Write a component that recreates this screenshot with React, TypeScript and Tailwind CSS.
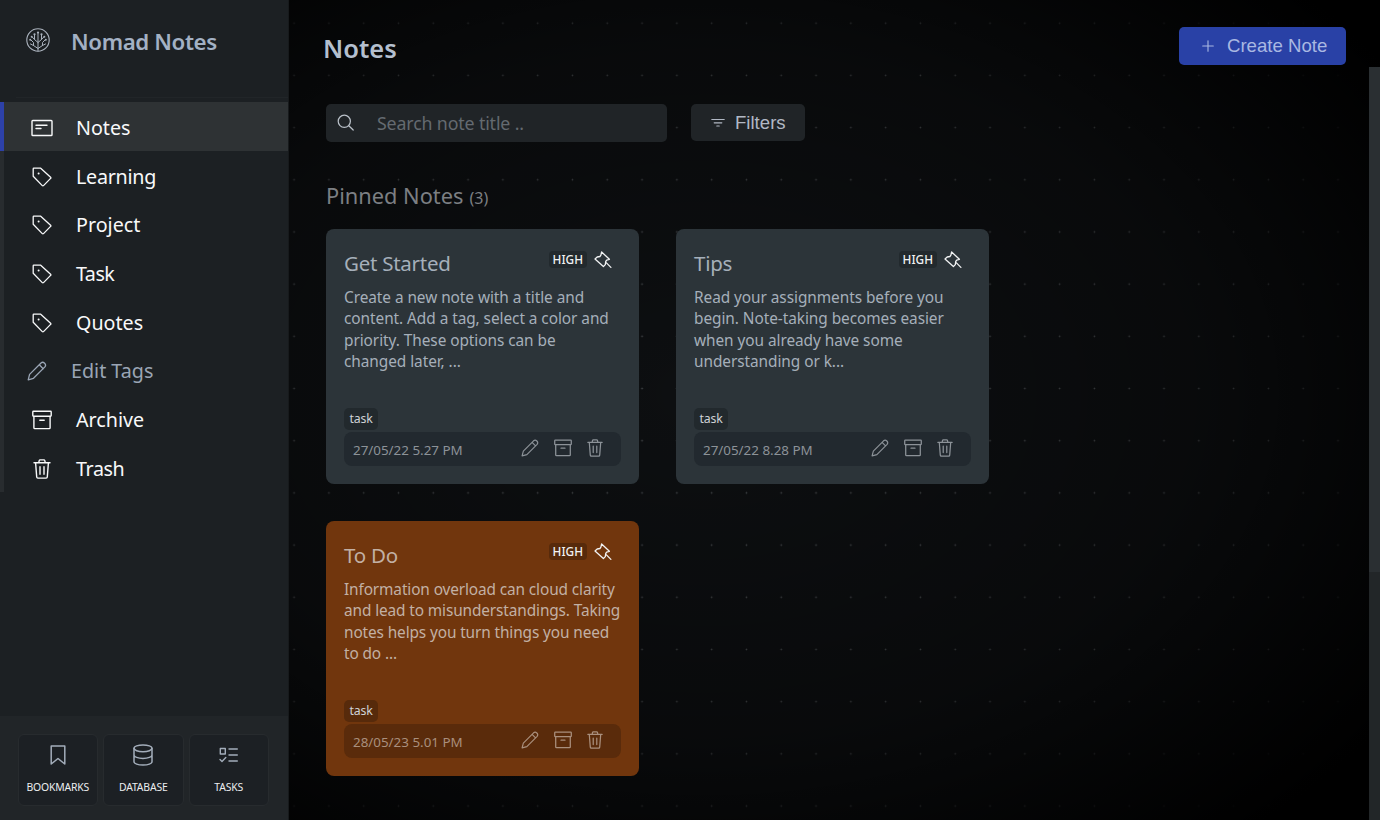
import React from "react";

type IconProps = { className?: string };
type Svg = (p: IconProps) => React.ReactElement;

const base = {
  fill: "none",
  stroke: "currentColor",
  strokeLinecap: "round" as const,
  strokeLinejoin: "round" as const,
};

const LogoIcon: Svg = ({ className }) => (
  <svg viewBox="0 0 24 24" className={className} {...base} strokeWidth={1}>
    <circle cx="12" cy="12" r="11.2" strokeWidth={1.1} />
    <path d="M12 23V5M12 20.500L7.500 17.500V14.500L4.500 11.500M12 20.500L16.500 17.500V14.500L19.500 11.500M7.500 17.500L4.500 16M16.500 17.500L19.500 16M12 14.500L8.500 11.500V7M8.500 11.500L6.200 9M12 14.500L15.500 11.500V7M15.500 11.500L17.800 9" />
    <g fill="currentColor" stroke="none">
      <circle cx="12" cy="4.500" r="1.100" />
      <circle cx="8.500" cy="6.300" r="1.100" />
      <circle cx="15.500" cy="6.300" r="1.100" />
      <circle cx="5.700" cy="8.700" r="1" />
      <circle cx="18.300" cy="8.700" r="1" />
      <circle cx="4.200" cy="11.800" r="1" />
      <circle cx="19.800" cy="11.800" r="1" />
    </g>
  </svg>
);
const NoteIcon: Svg = ({ className }) => (
  <svg viewBox="0 0 22 18" className={className} {...base} strokeWidth={1.400}>
    <rect x="1" y="1.500" width="20" height="15" rx="0.800" />
    <path d="M5 6.300h11M5 9.500h5" />
  </svg>
);
const TagIcon: Svg = ({ className }) => (
  <svg viewBox="0 0 20 20" className={className} {...base} strokeWidth={1.300}>
    <path d="M1.200 1.800Q1.200 1.200 1.800 1.200H8.700L18.600 10.300Q19.200 10.900 18.600 11.400L11.500 18.600Q10.900 19.200 10.300 18.600L1.200 9.300Z" />
    <circle cx="6.600" cy="6.400" r="1" fill="currentColor" stroke="none" />
  </svg>
);
const PencilIcon: Svg = ({ className }) => (
  <svg viewBox="0 0 20 20" className={className} {...base} strokeWidth={1.300}>
    <path d="M1.200 18.800L2.600 13.400L14 2Q15.700 0.500 17.600 2.200Q19.400 4.100 17.900 5.900L6.500 17.300ZM12.300 3.800l3.900 3.900" />
  </svg>
);
const ArchiveIcon: Svg = ({ className }) => (
  <svg viewBox="0 0 20 20" className={className} {...base} strokeWidth={1.400}>
    <rect x="0.800" y="1.300" width="18.400" height="5" rx="0.700" />
    <path d="M1.900 6.500V17.700Q1.900 18.600 2.800 18.600H17.200Q18.100 18.600 18.100 17.700V6.500M7.800 10.200h4.400" />
  </svg>
);
const TrashIcon: Svg = ({ className }) => (
  <svg viewBox="0 0 18 20" className={className} {...base} strokeWidth={1.400}>
    <path d="M1 3.800H17M5.700 3.800L6.200 1.600Q6.400 0.900 7.100 0.900H10.900Q11.600 0.900 11.800 1.600L12.300 3.800M2.600 3.800L3.700 18Q3.800 19.100 4.900 19.100H13.100Q14.200 19.100 14.300 18L15.400 3.800M7 7.800V15.200M11 7.800V15.200" />
  </svg>
);
const PinIcon: Svg = ({ className }) => (
  <svg viewBox="0 0 18 18" className={className} {...base} strokeWidth={1.300}>
    <path d="M7.600 1L15.400 8.300L12.700 9.200L11.700 10.500L11.300 13.600L9.400 15.600L1 7.900L3.200 6L5.900 5.500L6.900 4.200ZM12.200 11.600L16.900 16.400" />
  </svg>
);
const SearchIcon: Svg = ({ className }) => (
  <svg viewBox="0 0 18 18" className={className} {...base} strokeWidth={1.250}>
    <circle cx="7.300" cy="7.300" r="6.100" />
    <path d="M11.800 11.800l4.400 4.200" />
  </svg>
);
const BookmarkIcon: Svg = ({ className }) => (
  <svg viewBox="0 0 16 20" className={className} {...base} strokeWidth={1.500}>
    <path d="M1.200 1H14.800V19L8 13.500L1.200 19Z" />
  </svg>
);
const DatabaseIcon: Svg = ({ className }) => (
  <svg viewBox="0 0 20 22" className={className} {...base} strokeWidth={1.500}>
    <ellipse cx="10" cy="4.300" rx="9" ry="3.400" />
    <path d="M1 4.300V17.700C1 19.600 5 21.100 10 21.100S19 19.600 19 17.700V4.300M1 11C1 12.900 5 14.400 10 14.400S19 12.900 19 11" />
  </svg>
);
const TasksIcon: Svg = ({ className }) => (
  <svg viewBox="0 0 19 16" className={className} {...base} strokeWidth={1.400}>
    <path d="M1.300 1.500H6.300V7H1.300ZM1 12.500L3 14.500L6.800 10.600M10 2H18.300M10 8H18.300M10 14H18.300" />
  </svg>
);
const FilterIcon: Svg = ({ className }) => (
  <svg viewBox="0 0 14 10" className={className} {...base} strokeWidth={1.200}>
    <path d="M0.800 1.500H13.200M3.200 4.800H10.800M5.800 8H8.200" />
  </svg>
);
const PlusIcon: Svg = ({ className }) => (
  <svg viewBox="0 0 12 12" className={className} {...base} strokeWidth={1.100}>
    <path d="M6 0.700V11.300M0.700 6H11.300" />
  </svg>
);

type NavEntry = { label: string; icon: Svg; size: string; spacing?: string; active?: boolean; muted?: boolean };

const nav: NavEntry[] = [
  { label: "Notes", icon: NoteIcon, size: "w-[22px] h-[18px]", active: true },
  { label: "Learning", icon: TagIcon, size: "size-5", spacing: "tracking-[-0.250px]" },
  { label: "Project", icon: TagIcon, size: "size-5" },
  { label: "Task", icon: TagIcon, size: "size-5", spacing: "tracking-[-0.500px]" },
  { label: "Quotes", icon: TagIcon, size: "size-5" },
  { label: "Edit Tags", icon: PencilIcon, size: "size-5", muted: true },
  { label: "Archive", icon: ArchiveIcon, size: "size-5" },
  { label: "Trash", icon: TrashIcon, size: "w-[18px] h-5", spacing: "tracking-[-0.400px]" },
];

function NavItem({ label, icon: Icon, size, spacing, active, muted }: NavEntry) {
  const edge = active ? "border-[#2d41a8] bg-[#2e3234]" : "border-[#282c2f]";
  const tone = muted ? "pl-5 text-[#9aa5b5]" : "pl-[25px] text-[#f8f9fa]";
  return (
    <a className={`flex h-[48.700px] items-center border-l-4 pt-[3px] ${edge} ${tone}`}>
      <span className="flex w-[26px] justify-center">
        <Icon className={size} />
      </span>
      <span className={`ml-[21px] text-[19.700px] leading-6 ${spacing ?? ""}`}>{label}</span>
    </a>
  );
}

const shortcuts: { label: string; icon: Svg; size: string }[] = [
  { label: "BOOKMARKS", icon: BookmarkIcon, size: "w-4 h-5" },
  { label: "DATABASE", icon: DatabaseIcon, size: "w-5 h-[22px]" },
  { label: "TASKS", icon: TasksIcon, size: "w-[19px] h-4" },
];

function Sidebar() {
  return (
    <aside className="flex w-[289px] shrink-0 flex-col border-r border-[#171a1c] bg-[#1c2023]">
      <div className="flex h-[97px] items-start pl-[26px] pt-7">
        <LogoIcon className="size-6 text-[#aab2bd]" />
        <h1 className="ml-[21px] text-[22.300px] font-semibold leading-7 tracking-[-0.400px] text-[#a3b1c4]">
          Nomad Notes
        </h1>
      </div>
      <div className="ml-4 h-[5px] border-t border-[#212528]" />
      <nav className="flex flex-col">
        {nav.map((n) => (
          <NavItem key={n.label} {...n} />
        ))}
      </nav>
      <div className="mt-auto flex h-[104px] gap-[5px] bg-[#212528] pl-[17.500px] pt-[18px]">
        {shortcuts.map(({ label, icon: Icon, size }) => (
          <div
            key={label}
            className="flex h-[72px] w-[80.500px] flex-col items-center rounded-md border border-[#272b2e] bg-[#1c2024]"
          >
            <span className="flex h-[40px] items-center justify-center text-[#a3adba]">
              <Icon className={size} />
            </span>
            <span className="text-[10.400px] leading-6 tracking-[-0.150px] text-[#eceef0]">{label}</span>
          </div>
        ))}
      </div>
    </aside>
  );
}

type Note = { title: string; lines: string[]; date: string; orange?: boolean };

const notes: Note[] = [
  {
    title: "Get Started",
    lines: [
      "Create a new note with a title and",
      "content. Add a tag, select a color and",
      "priority. These options can be",
      "changed later, ...",
    ],
    date: "27/05/22 5.27 PM",
  },
  {
    title: "Tips",
    lines: [
      "Read your assignments before you",
      "begin. Note-taking becomes easier",
      "when you already have some",
      "understanding or k...",
    ],
    date: "27/05/22 8.28 PM",
  },
  {
    title: "To Do",
    lines: [
      "Information overload can cloud clarity",
      "and lead to misunderstandings. Taking",
      "notes helps you turn things you need",
      "to do ...",
    ],
    date: "28/05/23 5.01 PM",
    orange: true,
  },
];

function NoteCard({ title, lines, date, orange }: Note) {
  const card = orange ? "bg-[#71360d] text-[#c2b0a4]" : "bg-[#2c3439] text-[#a5afba]";
  const body = orange ? "tracking-[-0.120px]" : "tracking-[-0.060px]";
  const chip = orange ? "bg-[#572a0b]" : "bg-[#22292d]";
  const bar = orange ? "bg-[#5a2b0b] text-[#a98f7d]" : "bg-[#22292f] text-[#8c9298]";
  return (
    <article className={`flex h-[255.500px] w-[313px] flex-col rounded-lg px-[18px] pt-5 ${card}`}>
      <header className="flex h-7 items-start">
        <h3 className="text-[20.500px] leading-7 tracking-[-0.250px]">{title}</h3>
        <span className={`ml-auto mt-[2px] h-[17px] rounded px-[4px] text-[11.800px] font-medium leading-[17px] text-[#f1f2f3] ${chip}`}>
          HIGH
        </span>
        <PinIcon className="ml-[7px] mr-[9px] mt-[2px] size-[18px] text-[#f1f2f3]" />
      </header>
      <p className={`mt-[10px] whitespace-nowrap text-[15.400px] leading-[21.600px] ${body}`}>
        {lines.map((l) => (
          <span key={l} className="block">
            {l}
          </span>
        ))}
      </p>
      <div className="mt-auto">
        <span className={`flex h-[22px] w-[34px] items-center justify-center rounded-[5px] pt-px text-[12.300px] tracking-[-0.150px] text-[#cfd2d6] ${chip}`}>
          task
        </span>
      </div>
      <footer className={`mb-[18px] mt-[2px] flex h-[34px] w-[277px] shrink-0 items-center rounded-lg pl-[9px] pr-[18px] ${bar}`}>
        <span className="pt-[2px] text-[13.400px]">{date}</span>
        <span className="ml-auto flex items-center gap-[15px] pb-[2px]">
          <PencilIcon className="size-[18px]" />
          <ArchiveIcon className="size-[18px]" />
          <TrashIcon className="h-[18px] w-4" />
        </span>
      </footer>
    </article>
  );
}

export default function App() {
  return (
    <div className="flex h-[820px] w-[1380px] overflow-hidden bg-black font-['Noto_Sans',sans-serif]">
      <Sidebar />
      <div className="flex min-w-0 flex-1 bg-[radial-gradient(ellipse_830px_580px_at_38%_48%,transparent_0%,rgba(0,0,0,0.350)_60%,#000_100%),radial-gradient(circle_at_50%_50%,#484b4e_0.500px,transparent_1.200px),linear-gradient(#0d0f11,#0d0f11)] bg-size-[100%_100%,34.800px_52.200px,100%_100%] bg-position-[0_0,22.500px_-2.900px,0_0]">
        <main className="flex w-[1080px] shrink-0 flex-col pl-[37px]">
          <div className="flex h-[104px] items-start">
            <h2 className="-ml-[3px] mt-[30px] text-[25.500px] font-semibold leading-9 text-[#b4bfce]">Notes</h2>
            <button className="ml-auto mr-[23px] mt-[27px] flex h-[37.500px] w-[167px] items-center rounded-[5px] bg-[#2941a6] pl-[23px] font-['Liberation_Sans',sans-serif] text-[18.600px] text-[#a9b8e2]">
              <PlusIcon className="size-3" />
              <span className="ml-[13px] pt-px">Create Note</span>
            </button>
          </div>
          <div className="flex items-start gap-6">
            <div className="flex h-[38px] w-[341px] items-center rounded-[5px] bg-[#202427] pl-[11px]">
              <SearchIcon className="size-[18px] text-[#b9c0c8]" />
              <span className="ml-[22px] pt-px text-[17.800px] tracking-[-0.150px] text-[#646a70]">
                Search note title ..
              </span>
            </div>
            <button className="flex h-[37px] w-[114px] items-center rounded-[5px] bg-[#202427] pl-5 font-['Liberation_Sans',sans-serif] text-[18.600px] text-[#b1b8c4]">
              <FilterIcon className="mt-px h-[10px] w-[14px]" />
              <span className="ml-[10px]">Filters</span>
            </button>
          </div>
          <div className="mt-[38px] flex h-[48.500px] items-baseline gap-[6px] text-[#7c7f83]">
            <h3 className="text-[21.800px] leading-8">Pinned Notes</h3>
            <span className="text-[16px]">(3)</span>
          </div>
          <section className="grid grid-cols-[313px_313px] gap-x-[37px] gap-y-[36.500px]">
            {notes.map((n) => (
              <NoteCard key={n.title} {...n} />
            ))}
          </section>
        </main>
        <div className="mt-[67px] flex flex-1 flex-col bg-[#222628]">
          <div className="h-[505px] bg-[#2a2f32]" />
        </div>
      </div>
    </div>
  );
}
